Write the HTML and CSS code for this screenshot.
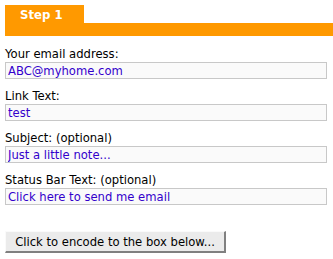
FILE: index.html
```html
<!DOCTYPE html>
<html lang="en">
<head>
    <meta charset="UTF-8">
    <title>Email Encoder - Step 1</title>
    <link rel="stylesheet" href="styles.css">
</head>
<body>
<div class="step">
    <div class="step-tab">Step 1</div>
    <div class="step-bar"></div>
</div>

<form class="encoder">
    <div class="field">
        <label for="email">Your email address:</label>
        <input type="text" id="email" value="ABC@myhome.com">
    </div>
    <div class="field">
        <label for="link">Link Text:</label>
        <input type="text" id="link" value="test">
    </div>
    <div class="field">
        <label for="subject">Subject: (optional)</label>
        <input type="text" id="subject" value="Just a little note...">
    </div>
    <div class="field">
        <label for="status">Status Bar Text: (optional)</label>
        <input type="text" id="status" value="Click here to send me email">
    </div>

    <button type="button">Click to encode to the box below...</button>
</form>
</body>
</html>
```

FILE: styles.css
```css
body {
    margin: 0;
    padding: 5px 6px 0 5px;
    font-family: 'DejaVu Sans', Verdana, sans-serif;
    font-size: 11.6px;
    color: #000;
    background: #fff;
}

.step-tab {
    width: 79px;
    height: 18px;
    background: #ff9900;
    color: #fff;
    font-family: 'DejaVu Sans Condensed', 'DejaVu Sans', sans-serif;
    font-weight: bold;
    font-size: 13px;
    line-height: 19px;
    padding-left: 15px;
    box-sizing: border-box;
}

.step-bar {
    height: 13px;
    margin-right: -6px;
    background: #ff9900;
}

.encoder {
    margin-top: 10px;
}

.field {
    margin-bottom: 9px;
}

label {
    display: block;
    line-height: 16px;
}

input {
    display: block;
    width: 100%;
    height: 17px;
    box-sizing: border-box;
    margin: 0;
    padding: 0 2px;
    border: 1px solid #c8c8c8;
    background: #fafafa;
    color: #3300cc;
    font-family: 'DejaVu Sans', Verdana, sans-serif;
    font-size: 11.6px;
}

button {
    display: block;
    margin-top: 26px;
    width: 221px;
    height: 22px;
    padding: 0;
    background: #ebebeb;
    border: 2px solid;
    border-color: #fafafa #808080 #808080 #fafafa;
    border-width: 1px 2px 2px 1px;
    font-family: 'DejaVu Sans', Verdana, sans-serif;
    font-size: 11.6px;
    color: #000;
}
```
